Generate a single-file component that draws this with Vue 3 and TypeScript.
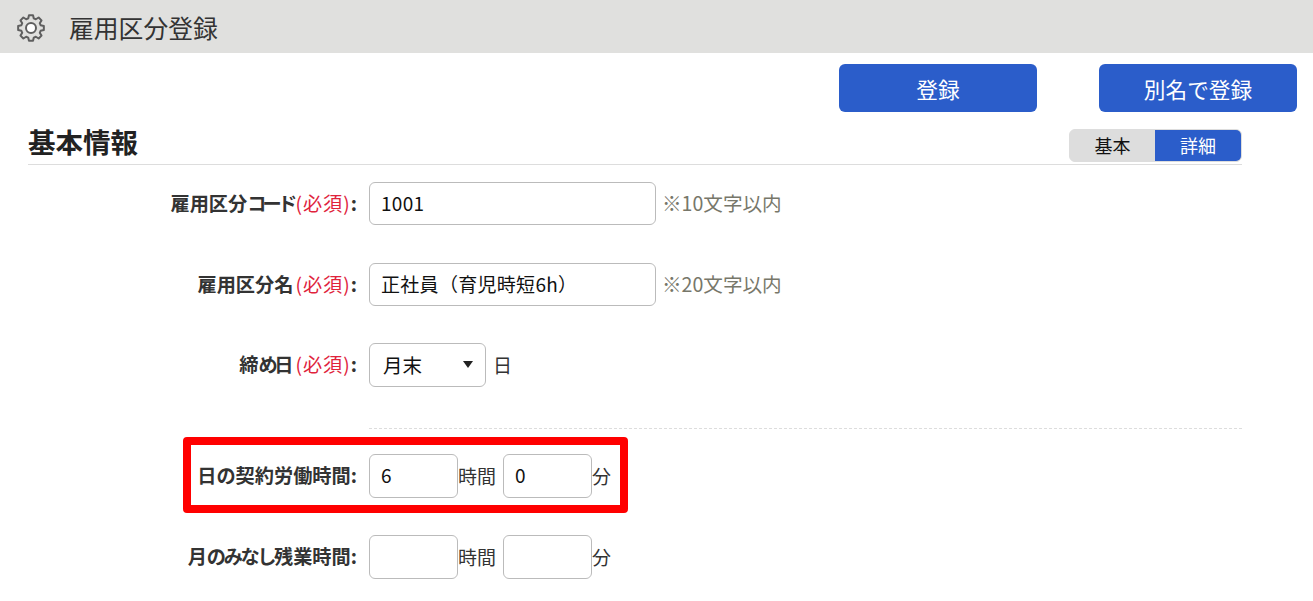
<script setup lang="ts">
import { computed } from 'vue'

const gearPath = computed(() => {
  const teeth = 8
  const cx = 14
  const cy = 14
  const outer = 13
  const inner = 10
  const pts: string[] = []
  for (let i = 0; i < teeth; i++) {
    const a = (i * 2 * Math.PI) / teeth - Math.PI / 2
    const step = (2 * Math.PI) / teeth
    const seq: [number, number][] = [
      [inner, a - step * 0.36],
      [outer, a - step * 0.2],
      [outer, a + step * 0.2],
      [inner, a + step * 0.36],
    ]
    for (const [r, t] of seq) {
      pts.push(`${(cx + r * Math.cos(t)).toFixed(2)} ${(cy + r * Math.sin(t)).toFixed(2)}`)
    }
  }
  return `M${pts.join('L')}Z`
})
</script>

<template>
  <div class="page">
    <header class="topbar">
      <svg class="gear" width="28" height="28" viewBox="0 0 28 28" aria-hidden="true">
        <path :d="gearPath" fill="none" stroke="#5f5f5f" stroke-width="2" stroke-linejoin="round" />
        <circle cx="14" cy="14" r="5" fill="#fff" stroke="#5f5f5f" stroke-width="2" />
      </svg>
      <h1 class="page-title">雇用区分登録</h1>
    </header>

    <div class="actions">
      <button class="action" type="button">登録</button>
      <button class="action" type="button">別名で登録</button>
    </div>

    <section class="section">
      <div class="section-head">
        <h2 class="section-title">基本情報</h2>
        <div class="toggle">
          <span class="toggle-item">基本</span>
          <span class="toggle-item active">詳細</span>
        </div>
      </div>

      <div class="form">
        <div class="row">
          <label class="label">雇用区分<span class="narrow">コード</span><span class="req">(必須)</span>:</label>
          <div class="field">
            <input class="input wide" type="text" value="1001" />
            <span class="hint">※10文字以内</span>
          </div>
        </div>
        <div class="row">
          <label class="label">雇用区分名<span class="req">(必須)</span>:</label>
          <div class="field">
            <input class="input wide" type="text" value="正社員（育児時短6h）" />
            <span class="hint">※20文字以内</span>
          </div>
        </div>
        <div class="row row-select">
          <label class="label">締<span class="kana-me">め</span>日<span class="req">(必須)</span>:</label>
          <div class="field">
            <div class="select">月末<i class="caret"></i></div>
            <span class="unit">日</span>
          </div>
        </div>

        <div class="divider"></div>

        <div class="row row-time highlighted">
          <label class="label">日の契約労働時間:</label>
          <div class="field time">
            <input class="input short" type="text" value="6" />
            <span class="unit">時間</span>
            <input class="input short second" type="text" value="0" />
            <span class="unit">分</span>
          </div>
          <div class="redbox"></div>
        </div>
        <div class="row row-time">
          <label class="label">月<span class="kana">のみなし</span>残業時間:</label>
          <div class="field time">
            <input class="input short" type="text" value="" />
            <span class="unit">時間</span>
            <input class="input short second" type="text" value="" />
            <span class="unit">分</span>
          </div>
        </div>
      </div>
    </section>
  </div>
</template>

<style>
html, body { margin: 0; background: #fff; overflow: hidden; }
</style>

<style scoped>
.page {
  width: 1313px;
  height: 601px;
  overflow: hidden;
  font-family: "Noto Sans CJK JP", "Noto Sans", sans-serif;
  color: #222;
  font-size: 19px;
}
.topbar {
  height: 53px;
  background: #e0e0de;
  display: flex;
  align-items: center;
  padding-left: 17px;
  box-sizing: border-box;
}
.gear { flex: none; margin-top: 3px; }
.page-title {
  margin: 2px 0 0 24px;
  font-size: 24.8px;
  font-weight: 400;
  line-height: 1;
  color: #333;
}
.actions {
  display: flex;
  justify-content: flex-end;
  gap: 62px;
  padding: 11px 16px 0 0;
}
.action {
  width: 198px;
  height: 48px;
  background: #2b5dca;
  border: 0;
  border-radius: 6px;
  color: #fff;
  font: 400 21.7px "Noto Sans CJK JP", sans-serif;
  padding: 0;
}
.section { margin: 17px 71px 0 28px; }
.section-head {
  height: 35px;
  border-bottom: 1px solid #ddd;
  display: flex;
  justify-content: space-between;
  align-items: flex-start;
}
.section-title {
  margin: -2px 0 0;
  font-size: 27.5px;
  line-height: 28px;
  font-weight: 700;
  color: #222;
}
.toggle {
  display: flex;
  width: 173px;
  height: 33px;
  border-radius: 6px;
  overflow: hidden;
  background: #ddd;
  border: 1px solid #ddd;
  box-sizing: border-box;
}
.toggle-item {
  text-align: center;
  font-size: 18px;
  line-height: 31px;
  color: #111;
}
.toggle-item:first-child { flex: 0 0 85px; }
.toggle-item.active { flex: 1; background: #2b5dca; color: #fff; }
.form { padding-top: 17px; }
.row {
  position: relative;
  display: flex;
  align-items: center;
  height: 43px;
  margin-bottom: 38px;
}
.row-select { height: 44px; margin-top: -1px; margin-bottom: 0; }
.row-time { height: 44px; margin-bottom: 37px; }
.label {
  width: 329px;
  box-sizing: border-box;
  padding-bottom: 2px;
  text-align: right;
  font-weight: 700;
  font-size: 19.2px;
  color: #333;
  flex: none;
  white-space: nowrap;
}
.narrow { letter-spacing: -3.8px; }
.kana { letter-spacing: -2.4px; }
.kana-me { letter-spacing: -3.5px; }
.req { color: #e0233c; font-weight: 400; padding-left: 2px; letter-spacing: 1px; }
.field {
  margin-left: 12px;
  display: flex;
  align-items: center;
}
.input {
  box-sizing: border-box;
  border: 1px solid #bbb;
  border-radius: 6px;
  background: #fff;
  font: 400 19px "Noto Sans CJK JP", sans-serif;
  letter-spacing: 0.3px;
  color: #111;
  padding: 0 11px 3px;
  outline: none;
}
.field .input { height: 43px; }
.wide { width: 287px; }
.short { width: 89px; }
.row-time .field .input { height: 44px; }
.second { margin-left: 7px; }
.hint { margin-left: 6px; padding-bottom: 3px; color: #77776a; font-size: 19.6px; }
.unit { color: #333; font-size: 19px; padding-bottom: 2px; }
.select {
  box-sizing: border-box;
  position: relative;
  width: 117px;
  height: 44px;
  border: 1px solid #bbb;
  border-radius: 6px;
  line-height: 42px;
  padding-left: 13px;
  color: #111;
  font-size: 19.5px;
}
.caret {
  position: absolute;
  right: 12px;
  top: 17px;
  border-left: 5.5px solid transparent;
  border-right: 5.5px solid transparent;
  border-top: 7px solid #222;
}
.row-select .unit { margin-left: 7px; }
.divider {
  margin: 41px 0 25px 341px;
  border-top: 1px dashed #ddd;
}
.redbox {
  position: absolute;
  left: 155px;
  top: -17px;
  width: 445px;
  height: 76px;
  box-sizing: border-box;
  border: 8px solid #f00;
  border-radius: 4px;
  pointer-events: none;
}
</style>
